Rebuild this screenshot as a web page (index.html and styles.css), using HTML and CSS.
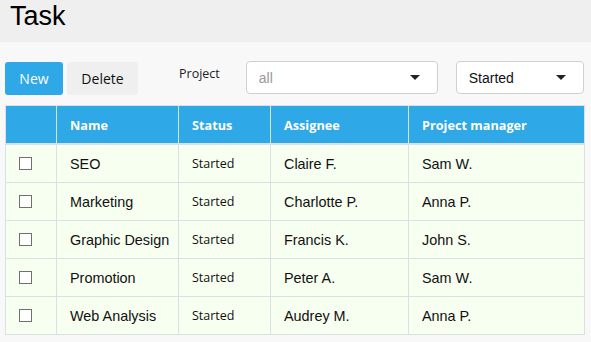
FILE: index.html
```html
<!DOCTYPE html>
<html lang="en">
<head>
    <meta charset="UTF-8">
    <title>Task</title>
    <link rel="stylesheet" href="styles.css">
</head>
<body>
    <header class="page-header">
        <h1>Task</h1>
    </header>

    <div class="toolbar">
        <button class="btn btn-primary">New</button>
        <button class="btn btn-default">Delete</button>
        <span class="filter-label">Project</span>
        <div class="select select-project">
            <span class="placeholder">all</span>
            <span class="caret"></span>
        </div>
        <div class="select select-status">
            <span>Started</span>
            <span class="caret"></span>
        </div>
    </div>

    <table class="task-table">
        <thead>
            <tr>
                <th class="col-check"></th>
                <th class="col-name">Name</th>
                <th class="col-status">Status</th>
                <th class="col-assignee">Assignee</th>
                <th>Project manager</th>
            </tr>
        </thead>
        <tbody>
            <tr>
                <td><span class="check"></span></td>
                <td>SEO</td>
                <td class="status">Started</td>
                <td>Claire F.</td>
                <td>Sam W.</td>
            </tr>
            <tr>
                <td><span class="check"></span></td>
                <td>Marketing</td>
                <td class="status">Started</td>
                <td>Charlotte P.</td>
                <td>Anna P.</td>
            </tr>
            <tr>
                <td><span class="check"></span></td>
                <td>Graphic Design</td>
                <td class="status">Started</td>
                <td>Francis K.</td>
                <td>John S.</td>
            </tr>
            <tr>
                <td><span class="check"></span></td>
                <td>Promotion</td>
                <td class="status">Started</td>
                <td>Peter A.</td>
                <td>Sam W.</td>
            </tr>
            <tr>
                <td><span class="check"></span></td>
                <td>Web Analysis</td>
                <td class="status">Started</td>
                <td>Audrey M.</td>
                <td>Anna P.</td>
            </tr>
        </tbody>
    </table>
</body>
</html>
```

FILE: styles.css
```css
body {
    margin: 0;
    background-color: #f8f8f8;
    font-family: "Liberation Sans", Arial, sans-serif;
    color: #111;
}

.page-header {
    background-color: #efefef;
    height: 42px;
    padding: 1px 0 0 10px;
    box-sizing: border-box;
}

.page-header h1 {
    margin: 0;
    font-size: 27px;
    font-weight: normal;
    color: #000;
}

.toolbar {
    display: flex;
    align-items: flex-start;
    height: 63px;
    padding: 19px 0 0 5px;
    box-sizing: border-box;
}

.btn {
    height: 33px;
    margin-top: 1px;
    border: none;
    border-radius: 3px;
    font-family: "Open Sans", sans-serif;
    font-size: 14px;
    padding: 0 13px;
}

.btn-primary {
    background-color: #2ea8e7;
    color: #fff;
    width: 58px;
}

.btn-default {
    background-color: #efefef;
    color: #111;
    margin-left: 4px;
    width: 71px;
}

.filter-label {
    font-family: "Open Sans", sans-serif;
    font-size: 12.5px;
    margin: 4px 0 0 41px;
    color: #222;
}

.select {
    display: flex;
    align-items: center;
    justify-content: space-between;
    height: 33px;
    box-sizing: border-box;
    background-color: #fff;
    border: 1px solid #d0d0d0;
    border-radius: 4px;
    padding: 0 17px 0 12px;
    font-size: 14px;
}

.select-project {
    width: 192px;
    margin-left: 26px;
}

.select-status {
    width: 128px;
    margin-left: 18px;
}

.placeholder {
    color: #999;
}

.caret {
    width: 0;
    height: 0;
    border-left: 5px solid transparent;
    border-right: 5px solid transparent;
    border-top: 5px solid #222;
}

.task-table {
    margin-left: 5px;
    width: 580px;
    border-collapse: collapse;
    border: 1px solid #dcdfe4;
}

.task-table th {
    background-color: #2ea8e7;
    color: #fff;
    font-family: "Open Sans", sans-serif;
    font-size: 12.7px;
    font-weight: bold;
    text-align: left;
    height: 37px;
    padding: 0 0 0 13px;
    border-left: 1px solid #dcdfe4;
    border-bottom: 2px solid #dcdfe4;
}

.task-table td {
    background-color: #f7fff0;
    font-size: 14.4px;
    line-height: 16px;
    height: 37px;
    padding: 0 0 0 13px;
    border: 1px solid #dcdfe4;
}

.col-check {
    width: 37px;
}

.col-name {
    width: 108px;
}

.col-status {
    width: 78px;
}

.col-assignee {
    width: 124px;
}

.task-table td.status {
    font-family: "Open Sans", sans-serif;
    font-size: 12.5px;
}

.check {
    display: block;
    width: 11px;
    height: 11px;
    background-color: #fff;
    border: 1px solid #707070;
}
```
